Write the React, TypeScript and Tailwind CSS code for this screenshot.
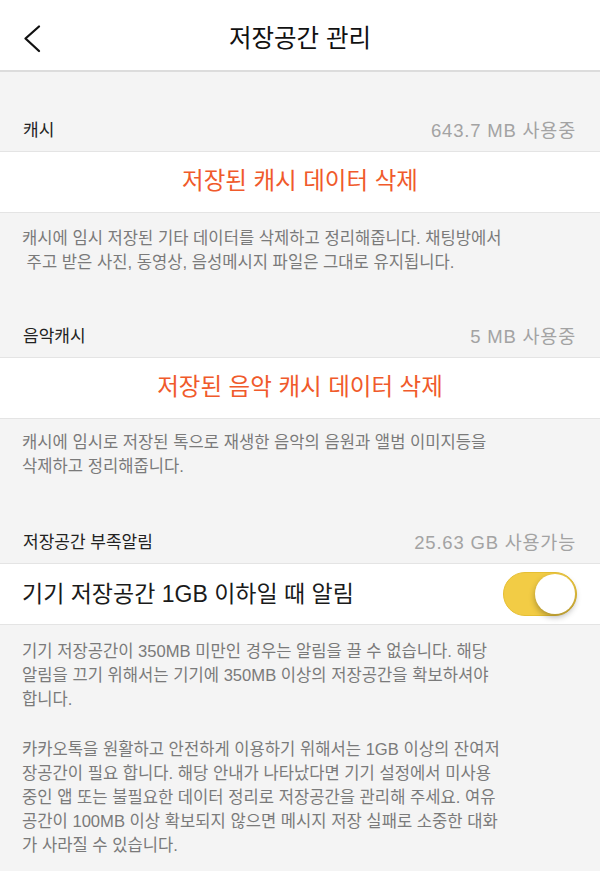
import React from "react";

const font = { fontFamily: '"Liberation Sans", "Noto Sans CJK KR", sans-serif' };

function Label({ left, right }: { left: string; right: string }) {
  return (
    <div className="flex h-[40px] items-center justify-between pl-[23px] pr-[24px]">
      <span className="text-[17px] text-[#222]">{left}</span>
      <span className="text-[18.5px] tracking-[0.8px] text-[#a3a3a3]">{right}</span>
    </div>
  );
}

function ActionRow({ text }: { text: string }) {
  return (
    <div className="flex h-[62px] items-center justify-center border-y border-[#e4e4e4] bg-white">
      <span className="text-[23.5px] text-[#f05a2b]">{text}</span>
    </div>
  );
}

function Lines({ lines }: { lines: string[] }) {
  return (
    <div className="px-[22px] text-[16.6px] leading-[24px] text-[#7a7a7a]">
      {lines.map((l, i) => (
        <div key={i} className="whitespace-pre">
          {l}
        </div>
      ))}
    </div>
  );
}

export default function App() {
  return (
    <div style={font} className="min-h-[871px] w-[600px] bg-[#f4f4f4]">
      <div className="relative flex h-[72px] items-center justify-center border-b-2 border-[#dcdcdc] bg-white pt-[8px]">
        <svg
          className="absolute left-[22px] top-[24px]"
          width="22"
          height="30"
          viewBox="0 0 22 30"
        >
          <path d="M17 2.5 L3.5 14.5 L17 27" fill="none" stroke="#111" strokeWidth="2.3" strokeLinecap="round" strokeLinejoin="round" />
        </svg>
        <span className="text-[24.5px] text-[#111]">저장공간 관리</span>
      </div>

      <div className="h-[39px]" />
      <Label left="캐시" right="643.7 MB 사용중" />
      <ActionRow text="저장된 캐시 데이터 삭제" />
      <div className="pt-[14px] pb-[42px]">
        <Lines
          lines={[
            "캐시에 임시 저장된 기타 데이터를 삭제하고 정리해줍니다. 채팅방에서",
            " 주고 받은 사진, 동영상, 음성메시지 파일은 그대로 유지됩니다.",
          ]}
        />
      </div>

      <Label left="음악캐시" right="5 MB 사용중" />
      <ActionRow text="저장된 음악 캐시 데이터 삭제" />
      <div className="pt-[12px] pb-[44px]">
        <Lines
          lines={[
            "캐시에 임시로 저장된 톡으로 재생한 음악의 음원과 앨범 이미지등을",
            "삭제하고 정리해줍니다.",
          ]}
        />
      </div>

      <Label left="저장공간 부족알림" right="25.63 GB 사용가능" />
      <div className="flex h-[62px] items-center justify-between border-y border-[#e4e4e4] bg-white pl-[22px] pr-[23px]">
        <span className="text-[23px] text-[#1a1a1a]">기기 저장공간 1GB 이하일 때 알림</span>
        <div className="relative h-[44px] w-[74px] rounded-full border border-[#e6bf33] bg-[#f2cc45]">
          <div className="absolute right-[1px] top-[1px] h-[40px] w-[40px] rounded-full bg-white shadow-[0_3px_6px_rgba(0,0,0,0.3)]" />
        </div>
      </div>
      <div className="pt-[15px] pb-[20px]">
        <Lines
          lines={[
            "기기 저장공간이 350MB 미만인 경우는 알림을 끌 수 없습니다. 해당",
            "알림을 끄기 위해서는 기기에 350MB 이상의 저장공간을 확보하셔야",
            "합니다.",
          ]}
        />
        <div className="h-[26px]" />
        <Lines
          lines={[
            "카카오톡을 원활하고 안전하게 이용하기 위해서는 1GB 이상의 잔여저",
            "장공간이 필요 합니다. 해당 안내가 나타났다면 기기 설정에서 미사용",
            "중인 앱 또는 불필요한 데이터 정리로 저장공간을 관리해 주세요. 여유",
            "공간이 100MB 이상 확보되지 않으면 메시지 저장 실패로 소중한 대화",
            "가 사라질 수 있습니다.",
          ]}
        />
      </div>
    </div>
  );
}
